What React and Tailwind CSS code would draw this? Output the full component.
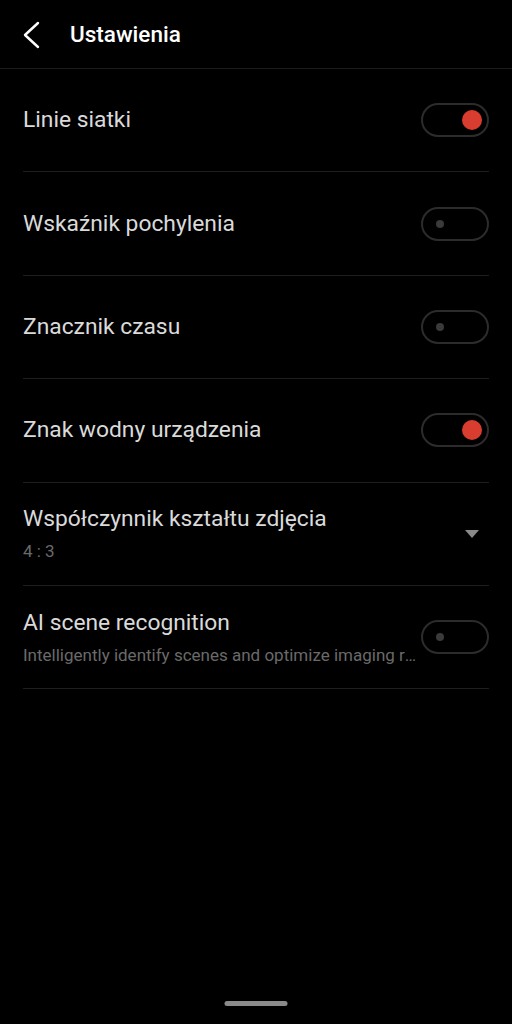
import React from "react";

function Toggle({ on }) {
  return (
    <div className="relative h-[34px] w-[68px] shrink-0 rounded-full border-2 border-[#2c2c2c]">
      {on ? (
        <div className="absolute right-[5px] top-[5px] h-5 w-5 rounded-full bg-[#d93d2f]" />
      ) : (
        <div className="absolute left-[13px] top-[11px] h-2 w-2 rounded-full bg-[#3a3a3a]" />
      )}
    </div>
  );
}

function Row({ title, subtitle, right }) {
  return (
    <div className="flex h-[103.4px] items-center border-b border-[#1e1e1e]">
      <div className="flex min-w-0 flex-1 flex-col">
        <div className="text-[22.8px] leading-[28px] text-[#dadada]">{title}</div>
        {subtitle && (
          <div className="mt-[7px] truncate text-[17px] leading-[22px] text-[#6a6a6a]">{subtitle}</div>
        )}
      </div>
      {right}
    </div>
  );
}

export default function App() {
  return (
    <div
      className="relative h-[1024px] w-[512px] overflow-hidden bg-black"
      style={{ fontFamily: "Roboto, 'Noto Sans', sans-serif" }}
    >
      <header className="flex h-[69px] items-center border-b border-[#1c1c1c] pl-[20px] pt-[2px]">
        <svg width="22" height="28" viewBox="0 0 22 28" fill="none">
          <path d="M18 2 L5 14 L18 26" stroke="#ffffff" strokeWidth="2.4" strokeLinecap="round" strokeLinejoin="round" />
        </svg>
        <h1 className="ml-[28px] text-[22.5px] font-medium text-white">Ustawienia</h1>
      </header>

      <div className="px-[23px]">
        <Row title="Linie siatki" right={<Toggle on />} />
        <Row title="Wskaźnik pochylenia" right={<Toggle />} />
        <Row title="Znacznik czasu" right={<Toggle />} />
        <Row title="Znak wodny urządzenia" right={<Toggle on />} />
        <Row
          title="Współczynnik kształtu zdjęcia"
          subtitle="4 : 3"
          right={
            <svg width="14" height="8" viewBox="0 0 14 8" className="mr-[10px]">
              <path d="M0 0 H14 L7 8 Z" fill="#8a8a8a" />
            </svg>
          }
        />
        <Row
          title="AI scene recognition"
          subtitle="Intelligently identify scenes and optimize imaging results"
          right={<Toggle />}
        />
      </div>

      <div className="absolute bottom-[18px] left-1/2 h-[5px] w-[63px] -translate-x-1/2 rounded-full bg-[#8a8a8a]" />
    </div>
  );
}
